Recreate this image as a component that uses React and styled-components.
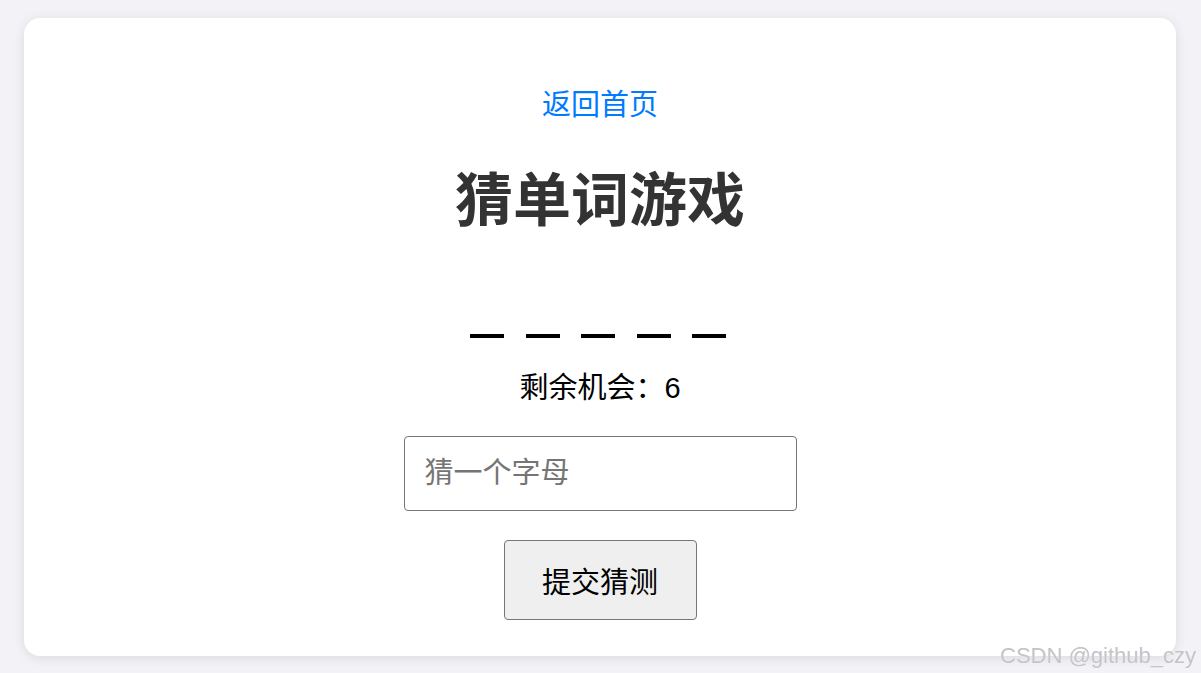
import styled, { createGlobalStyle } from "styled-components";

const GlobalStyle = createGlobalStyle`
  html, body {
    margin: 0;
    padding: 0;
    background: #f3f3f7;
  }
  body {
    font-family: "Liberation Sans", "Noto Sans CJK SC", sans-serif;
  }
`;

const Page = styled.div`
  position: relative;
  min-height: 673px;
  box-sizing: border-box;
  padding: 18px 25px 17px 24px;
`;

const Card = styled.div`
  background: #fff;
  border-radius: 16px;
  box-shadow: 0 2px 12px rgba(0, 0, 0, 0.1);
  display: flex;
  flex-direction: column;
  align-items: center;
  padding: 67px 0 36px;
`;

const HomeLink = styled.a`
  font-size: 29px;
  line-height: 40px;
  color: #007bff;
  text-decoration: none;
  cursor: pointer;
`;

const Title = styled.h1`
  margin: 41px 0 0;
  font-size: 58px;
  line-height: 70px;
  font-weight: 700;
  color: #333;
`;

const Word = styled.div`
  margin-top: 98px;
  padding-right: 4px;
  display: flex;
  gap: 21.5px;
`;

const Blank = styled.span`
  display: block;
  width: 34px;
  height: 4px;
  background: #000;
`;

const Chances = styled.p`
  margin: 30px 0 0;
  font-size: 29px;
  line-height: 40px;
  color: #000;
`;

const GuessInput = styled.input`
  margin-top: 28px;
  width: 393px;
  height: 75px;
  box-sizing: border-box;
  padding: 0 20px;
  border: 1px solid #767676;
  border-radius: 4px;
  font-family: inherit;
  font-size: 29px;
  color: #000;
  outline: none;
  &::placeholder {
    color: #757575;
  }
`;

const SubmitButton = styled.button`
  margin-top: 29px;
  width: 193px;
  height: 80px;
  box-sizing: border-box;
  background: #efefef;
  border: 1px solid #767676;
  border-radius: 4px;
  font-family: inherit;
  font-size: 29px;
  color: #000;
  cursor: pointer;
`;

const Watermark = styled.span`
  position: absolute;
  right: 5px;
  bottom: 4px;
  font-size: 22px;
  color: #c4c4c8;
  text-shadow: 0 0 1px #fff;
`;

export default function App() {
  const word = ["", "", "", "", ""];
  return (
    <>
      <GlobalStyle />
      <Page>
        <Card>
          <HomeLink>返回首页</HomeLink>
          <Title>猜单词游戏</Title>
          <Word>
            {word.map((_, i) => (
              <Blank key={i} />
            ))}
          </Word>
          <Chances>剩余机会：6</Chances>
          <GuessInput placeholder="猜一个字母" maxLength={1} />
          <SubmitButton>提交猜测</SubmitButton>
        </Card>
        <Watermark>CSDN @github_czy</Watermark>
      </Page>
    </>
  );
}
